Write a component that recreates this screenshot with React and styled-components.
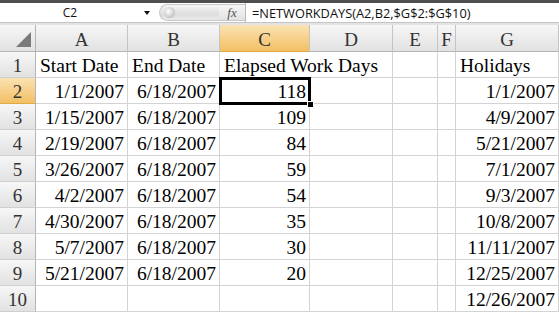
import React from "react";
import styled, { createGlobalStyle, css } from "styled-components";

const Global = createGlobalStyle`
  html, body { margin: 0; padding: 0; background: #fff; overflow: hidden; }
  #root { width: 559px; height: 315px; overflow: hidden; }
`;

const Window = styled.div`
  width: 559px;
  height: 315px;
  overflow: hidden;
  background: #fff;
  display: flex;
  flex-direction: column;
`;

const TopStrip = styled.div`
  height: 3px;
  flex: none;
  background: #4f4f4f;
`;

const FormulaBar = styled.div`
  height: 19px;
  flex: none;
  display: flex;
  align-items: center;
  background: #fff;
  border-bottom: 1px solid #c5c5c5;
  font-family: "Open Sans", "Liberation Sans", sans-serif;
  font-size: 12px;
  color: #111;
`;

const NameBox = styled.div`
  width: 140px;
  height: 100%;
  display: flex;
  align-items: center;
  justify-content: center;
  box-sizing: border-box;
`;

const Arrow = styled.div`
  width: 0;
  height: 0;
  margin: 0 9px 0 4px;
  border-left: 3.5px solid transparent;
  border-right: 3.5px solid transparent;
  border-top: 4px solid #111;
`;

const Pill = styled.div`
  width: 60px;
  height: 17px;
  border-radius: 9px 0 0 9px;
  background: linear-gradient(to bottom, #f6f6f6, #dedede 60%, #e9e9e9);
  border: 1px solid #c8c8c8;
  border-right: none;
  box-sizing: border-box;
  display: flex;
  align-items: center;
  padding-left: 4px;
`;

const Knob = styled.div`
  width: 11px;
  height: 11px;
  border-radius: 50%;
  background: radial-gradient(circle at 40% 40%, #ffffff, #c4c4c4 70%, #b0b0b0);
`;

const Fx = styled.div`
  width: 26px;
  height: 17px;
  display: flex;
  align-items: center;
  justify-content: center;
  font-family: "Liberation Serif", serif;
  font-style: italic;
  font-size: 13px;
  color: #555;
  background: linear-gradient(to bottom, #f6f6f6, #e2e2e2);
  border-top: 1px solid #c8c8c8;
  border-bottom: 1px solid #c8c8c8;
  box-sizing: border-box;
`;

const FormulaText = styled.div`
  flex: 1;
  height: 100%;
  display: flex;
  align-items: center;
  padding-left: 6px;
  border-left: 1px solid #b8b8b8;
  font-size: 12.8px;
`;

const Band = styled.div`
  height: 2px;
  flex: none;
  background: #e3e3e3;
`;

const Grid = styled.div`
  display: grid;
  grid-template-columns: 36px 92px 92px 90px 83px 45px 18px 103px;
  grid-template-rows: 27px 26px 26px 26px 26px 26px 26px 26px 26px 26px 26px;
  font-family: "Liberation Serif", "Times New Roman", serif;
`;

const headerBg = css`
  background: linear-gradient(to bottom, #f7f7f7 0%, #ececec 50%, #e2e2e2 100%);
`;
const activeBg = css`
  background: linear-gradient(to bottom, #fae3b4 0%, #f7d18b 50%, #f2c064 100%);
`;

const Corner = styled.div`
  ${headerBg};
  border-right: 1px solid #b5b5b5;
  border-bottom: 1px solid #b5b5b5;
  position: relative;
  box-sizing: border-box;
  &::after {
    content: "";
    position: absolute;
    right: 4px;
    bottom: 4px;
    width: 0;
    height: 0;
    border-left: 15px solid transparent;
    border-bottom: 15px solid #7a7a7a;
  }
`;

const ColHead = styled.div`
  ${(p) => (p.$active ? activeBg : headerBg)};
  border-right: 1px solid #c4c4c4;
  border-bottom: 1px solid ${(p) => (p.$active ? "#e2a947" : "#b5b5b5")};
  box-sizing: border-box;
  display: flex;
  align-items: center;
  justify-content: center;
  font-size: 19px;
  color: #333;
  padding-top: 3px;
`;

const RowHead = styled.div`
  ${(p) => (p.$active ? activeBg : headerBg)};
  border-right: 1px solid #b5b5b5;
  border-bottom: 1px solid ${(p) => (p.$active ? "#e2a947" : "#cfcfcf")};
  box-sizing: border-box;
  display: flex;
  align-items: center;
  justify-content: center;
  font-size: 19px;
  color: #333;
  padding-top: 2px;
`;

const Cell = styled.div`
  border-right: 1px solid ${(p) => (p.$overflow ? "transparent" : "#d3d3d3")};
  border-bottom: 1px solid #d3d3d3;
  box-sizing: border-box;
  display: flex;
  align-items: flex-end;
  justify-content: ${(p) => (p.$right ? "flex-end" : "flex-start")};
  padding: 0 ${(p) => (p.$right ? "3px" : "0")} 0 ${(p) => (p.$right ? "0" : "4px")};
  font-size: 19.5px;
  line-height: 22px;
  color: #000;
  white-space: nowrap;
  overflow: ${(p) => (p.$overflow ? "visible" : "hidden")};
  position: relative;
  ${(p) => p.$overflow && css`z-index: 1;`}
  ${(p) =>
    p.$selected &&
    css`
      z-index: 2;
      overflow: visible;
      &::before {
        content: "";
        position: absolute;
        left: -1px;
        top: -1px;
        right: -2px;
        bottom: -2px;
        border: 3px solid #000;
      }
      &::after {
        content: "";
        position: absolute;
        right: -5px;
        bottom: -5px;
        width: 5px;
        height: 5px;
        background: #000;
        border: 1px solid #fff;
      }
    `}
`;

const cols = ["A", "B", "C", "D", "E", "F", "G"];

const rows = [
  ["Start Date", "End Date", "Elapsed Work Days", "", "", "", "Holidays"],
  ["1/1/2007", "6/18/2007", "118", "", "", "", "1/1/2007"],
  ["1/15/2007", "6/18/2007", "109", "", "", "", "4/9/2007"],
  ["2/19/2007", "6/18/2007", "84", "", "", "", "5/21/2007"],
  ["3/26/2007", "6/18/2007", "59", "", "", "", "7/1/2007"],
  ["4/2/2007", "6/18/2007", "54", "", "", "", "9/3/2007"],
  ["4/30/2007", "6/18/2007", "35", "", "", "", "10/8/2007"],
  ["5/7/2007", "6/18/2007", "30", "", "", "", "11/11/2007"],
  ["5/21/2007", "6/18/2007", "20", "", "", "", "12/25/2007"],
  ["", "", "", "", "", "", "12/26/2007"],
];

export default function App() {
  return (
    <>
      <Global />
      <Window>
        <TopStrip />
        <FormulaBar>
          <NameBox>C2</NameBox>
          <Arrow />
          <Pill>
            <Knob />
          </Pill>
          <Fx>fx</Fx>
          <FormulaText>=NETWORKDAYS(A2,B2,$G$2:$G$10)</FormulaText>
        </FormulaBar>
        <Band />
        <Grid>
          <Corner />
          {cols.map((c) => (
            <ColHead key={c} $active={c === "C"}>
              {c}
            </ColHead>
          ))}
          {rows.map((r, ri) => (
            <React.Fragment key={ri}>
              <RowHead $active={ri === 1}>{ri + 1}</RowHead>
              {r.map((v, ci) => {
                const header = ri === 0;
                return (
                  <Cell
                    key={ci}
                    $right={!header && v !== ""}
                    $overflow={header && ci === 2}
                    $selected={ri === 1 && ci === 2}
                  >
                    {v}
                  </Cell>
                );
              })}
            </React.Fragment>
          ))}
        </Grid>
      </Window>
    </>
  );
}
